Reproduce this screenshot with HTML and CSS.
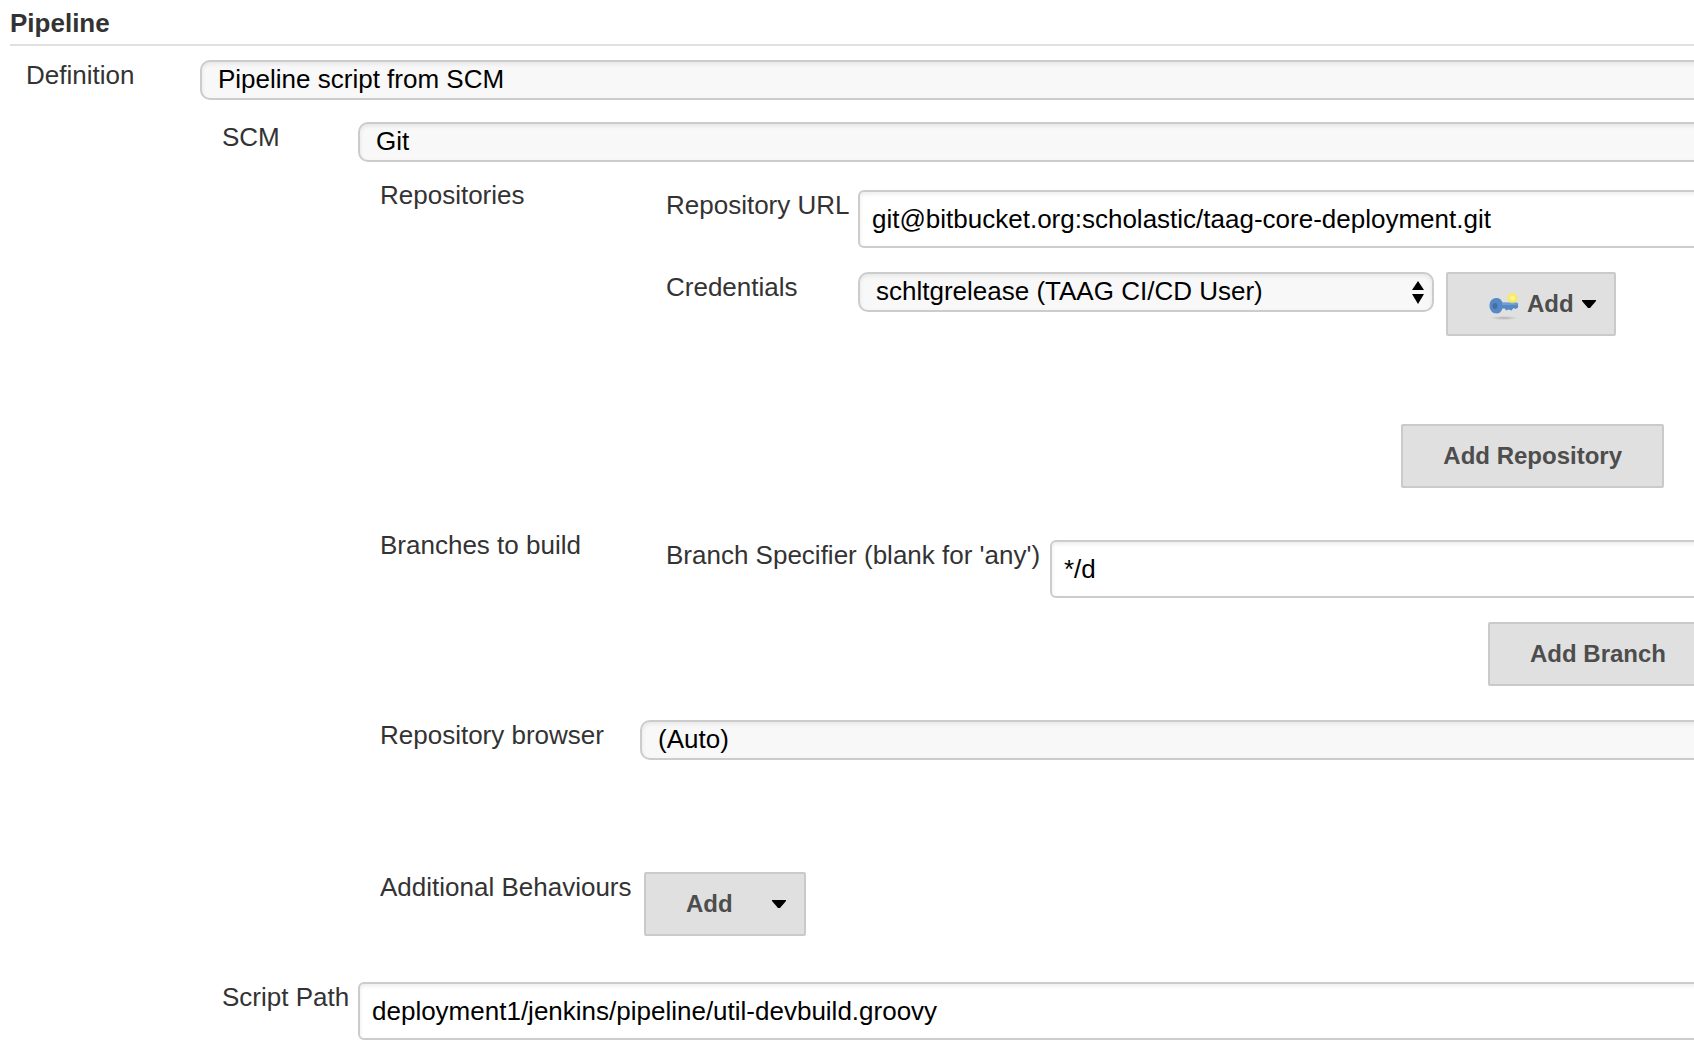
FILE: index.html
```html
<!DOCTYPE html>
<html lang="en">
<head>
<meta charset="UTF-8">
<meta name="viewport" content="width=device-width, initial-scale=1">
<title>Pipeline</title>
<link rel="stylesheet" href="styles.css">
</head>
<body>

<form class="config">
  <h1>Pipeline</h1>

  <div class="row definition">
    <label for="definition">Definition</label>
    <div class="select">
      <select id="definition"><option>Pipeline script from SCM</option></select>
    </div>
  </div>

  <div class="nested">
    <div class="row scm">
      <label for="scm">SCM</label>
      <div class="select">
        <select id="scm"><option>Git</option></select>
      </div>
    </div>

    <!-- Git settings -->
    <div class="git">
      <div class="row repositories">
        <span class="label">Repositories</span>
        <div class="group">
          <div class="row url">
            <label for="url">Repository URL</label>
            <input type="text" id="url" value="git@bitbucket.org:scholastic/taag-core-deployment.git">
          </div>
          <div class="row credentials">
            <label for="credentials">Credentials</label>
            <div class="select">
              <select id="credentials"><option>schltgrelease (TAAG CI/CD User)</option></select>
            </div>
            <button type="button" class="add-credentials">
              <svg class="key" width="32" height="32" viewBox="0 0 32 32" aria-hidden="true">
                <defs>
                  <radialGradient id="glow">
                    <stop offset="0" stop-color="#fffbb0"/>
                    <stop offset="0.6" stop-color="#f8ea58"/>
                    <stop offset="1" stop-color="#f8ea58" stop-opacity="0"/>
                  </radialGradient>
                  <radialGradient id="shadow">
                    <stop offset="0" stop-color="#b0b0b0"/>
                    <stop offset="1" stop-color="#b0b0b0" stop-opacity="0"/>
                  </radialGradient>
                </defs>
                <ellipse cx="16" cy="30" rx="14" ry="2" fill="url(#shadow)"/>
                <path d="M8.500 10c3 0 5 2 6 4.500h14l1.500 1v4l-2.500 1.500-2-1-2 2.500-3-1-2 1-2-2h-2c-1 3-3 5-6 5-4 0-7-3.500-7-8s3-7.500 7-7.500z" fill="#5488c6"/>
                <path d="M14 16h15" stroke="#7ba4d4" stroke-width="1.500"/>
                <ellipse cx="7" cy="18" rx="2.500" ry="3" fill="#466f9d"/>
                <circle cx="24.500" cy="10" r="6" fill="url(#glow)"/>
              </svg>
              Add
              <svg class="caret" width="14" height="8" viewBox="0 0 14 8" aria-hidden="true"><path d="M0 0h14v1L8 8H6L0 1z"/></svg>
            </button>
          </div>
          <div class="actions add-repository">
            <button type="button">Add Repository</button>
          </div>
        </div>
      </div>

      <div class="row branches">
        <span class="label">Branches to build</span>
        <div class="group">
          <div class="row specifier">
            <label for="branch">Branch Specifier (blank for 'any')</label>
            <input type="text" id="branch" value="*/d">
          </div>
          <div class="actions add-branch">
            <button type="button">Add Branch</button>
          </div>
        </div>
      </div>

      <div class="row browser">
        <label for="browser">Repository browser</label>
        <div class="select">
          <select id="browser"><option>(Auto)</option></select>
        </div>
      </div>

      <div class="row behaviours">
        <span class="label">Additional Behaviours</span>
        <button type="button" class="add-behaviour">
          Add
          <svg class="caret" width="14" height="8" viewBox="0 0 14 8" aria-hidden="true"><path d="M0 0h14v1L8 8H6L0 1z"/></svg>
        </button>
      </div>
    </div>

    <div class="row script-path">
      <label for="script-path">Script Path</label>
      <input type="text" id="script-path" value="deployment1/jenkins/pipeline/util-devbuild.groovy">
    </div>
  </div>
</form>

</body>
</html>
```
FILE: styles.css
```css
* {
  box-sizing: border-box;
}

body {
  margin: 0;
  overflow-x: hidden;
  background: #fff;
  color: #333;
  font: 26px/30px "Liberation Sans", Arial, sans-serif;
}

/* the form runs past the right edge of the window */
.config {
  margin-right: -40px;
  padding: 8px 0 22px 10px;
}

h1 {
  margin: 0 0 14px;
  padding-bottom: 6px;
  border-bottom: 2px solid #e0e0e0;
  font-size: 26px;
  line-height: 30px;
}

.row {
  display: flex;
  align-items: flex-start;
}

.row > label,
.row > .label {
  flex: none;
  white-space: nowrap;
}

/* fields */
input,
select {
  width: 100%;
  margin: 0;
  border: 2px solid #ccc;
  color: #000;
  font: inherit;
  box-shadow: inset 0 2px 4px rgba(0, 0, 0, 0.08);
}

input {
  flex: 1;
  min-width: 0;
  height: 58px;
  padding: 0 12px;
  border-radius: 6px;
  background: #fff;
}

.select {
  position: relative;
  flex: 1;
  min-width: 0;
}

select {
  display: block;
  height: 40px;
  padding: 0 40px 2px 16px;
  border-radius: 10px;
  background: #f8f8f8;
  appearance: none;
}

/* up and down arrows */
.select::before,
.select::after {
  content: "";
  position: absolute;
  right: 10px;
  border: 6px solid transparent;
  pointer-events: none;
}

.select::before {
  top: 9px;
  border-top: 0;
  border-bottom: 9px solid #000;
}

.select::after {
  bottom: 8px;
  border-bottom: 0;
  border-top: 10px solid #000;
}

button {
  display: flex;
  align-items: center;
  height: 64px;
  margin: 0;
  padding: 0 40px;
  border: 2px solid #cacaca;
  border-radius: 2px;
  background: #e0e0e0;
  color: #4d4d4d;
  font: bold 24px/28px "Liberation Sans", Arial, sans-serif;
  white-space: nowrap;
}

.caret {
  fill: #000;
}

/* rows */
.definition {
  padding-left: 16px;
}

.definition > label {
  width: 174px;
}

.nested {
  padding: 22px 0 0 212px;
}

.scm > label,
.script-path > label {
  width: 136px;
}

.git {
  padding: 18px 0 0 158px;
}

.git > .row > label,
.git > .row > .label {
  width: 260px;
}

.group {
  flex: 1;
  min-width: 0;
  padding: 10px 0 0 26px;
}

.url > label,
.credentials > label {
  width: 192px;
}

.credentials {
  margin-top: 24px;
}

.credentials .select {
  flex: 0 1 576px;
}

.add-credentials {
  margin-left: 12px;
  padding: 0 18px 0 40px;
}

.key {
  margin-right: 7px;
}

.add-credentials .caret {
  margin-left: 8px;
}

.actions {
  display: flex;
  justify-content: flex-end;
}

.add-repository {
  margin-top: 88px;
  padding-right: 70px;
}

.branches {
  margin-top: 42px;
}

.specifier > label {
  width: 384px;
}

.add-branch {
  margin-top: 24px;
  padding-right: 26px;
}

.browser {
  margin-top: 34px;
}

.behaviours {
  margin-top: 112px;
}

.add-behaviour {
  margin-left: 4px;
  padding-right: 18px;
}

.add-behaviour .caret {
  margin-left: 39px;
}

.script-path {
  margin-top: 46px;
}
```
